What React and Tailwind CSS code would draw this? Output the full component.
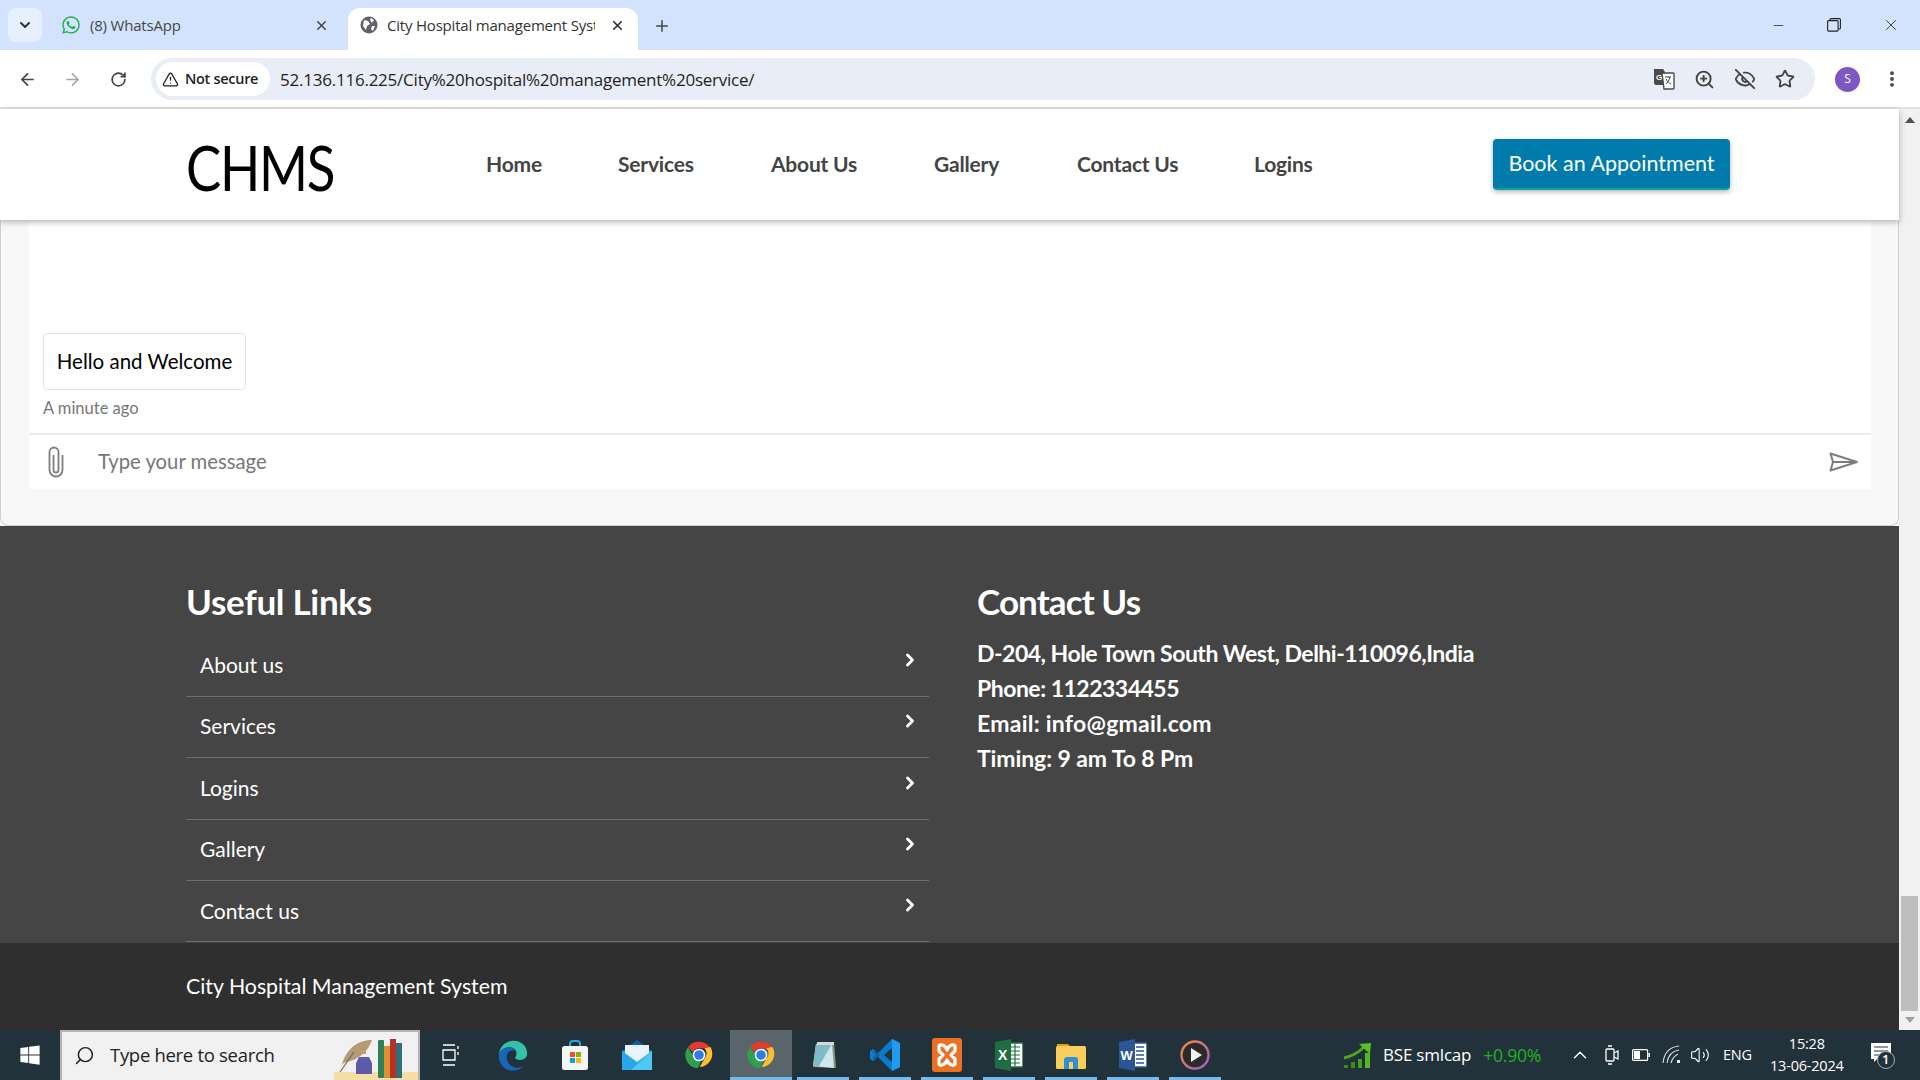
import React from 'react';
import { FaWhatsapp, FaWindows } from 'react-icons/fa';
import { ChevronDown, X, Plus, ArrowLeft, ArrowRight, RotateCw, TriangleAlert, ZoomIn, EyeOff, Star, EllipsisVertical, Minus, Search, ChevronRight, ChevronUp, Volume2 } from 'lucide-react';

const navItems = [
  { label: 'Home', cls: 'w-[55px]' },
  { label: 'Services', cls: 'w-[76px]' },
  { label: 'About Us', cls: 'w-[86px]' },
  { label: 'Gallery', cls: 'w-[66px]' },
  { label: 'Contact Us', cls: 'w-[100px]' },
  { label: 'Logins', cls: 'w-[61px]' },
];
const links = ['About us', 'Services', 'Logins', 'Gallery', 'Contact us'];
const contact = [
  { text: 'D-204, Hole Town South West, Delhi-110096,India', cls: 'tracking-[-0.5px]' },
  { text: 'Phone: 1122334455', cls: 'tracking-[-0.5px]' },
  { text: 'Email: info@gmail.com', cls: 'tracking-[0.25px]' },
  { text: 'Timing: 9 am To 8 Pm', cls: 'tracking-[-0.1px]' },
];

function ChromeLogo({ size = 26 }) {
  return (
    <svg width={size} height={size} viewBox="0 0 48 48">
      <path d="M24 4a20 20 0 0 1 17.3 10H24a10 10 0 0 0-9.2 6L7.6 12A20 20 0 0 1 24 4z" fill="#e33b2e" />
      <path d="M41.3 14A20 20 0 0 1 25 44l8.6-15A10 10 0 0 0 32 16z" fill="#fbc02d" transform="translate(0 -2)" />
      <path d="M7.6 12l9 15.5A10 10 0 0 0 27 33.5L22.5 44A20 20 0 0 1 7.6 12z" fill="#2e9e4f" />
      <circle cx="24" cy="24" r="9.5" fill="#fff" />
      <circle cx="24" cy="24" r="7.2" fill="#2f7de1" />
    </svg>
  );
}

function EdgeLogo() {
  return (
    <svg width="34" height="34" viewBox="0 0 48 48">
      <path d="M4 26C4 12 14 4 25 4c11 0 19 8 19 18 0 6-5 9-10 9-4 0-7-1-7-3 0-1 2-2 2-6 0-5-4-9-10-9C11 13 4 19 4 26z" fill="#35c1a8" />
      <path d="M4 26c0-8 7-13 14-13 5 0 8 2 10 5-6-2-13 1-13 9 0 8 7 15 15 15 3 0 6-1 8-2-4 5-9 6-14 6C13 46 4 37 4 26z" fill="#1667b8" />
    </svg>
  );
}

function StoreLogo() {
  return (
    <svg width="28" height="32" viewBox="0 0 28 32">
      <path d="M9 8V5a3 3 0 0 1 3-3h4a3 3 0 0 1 3 3v3" fill="none" stroke="#2aa7d8" strokeWidth="2" />
      <rect x="1" y="7" width="26" height="24" rx="2.5" fill="#f5f5f5" />
      <rect x="9" y="13" width="5" height="5" fill="#f25022" />
      <rect x="15" y="13" width="5" height="5" fill="#7fba00" />
      <rect x="9" y="19" width="5" height="5" fill="#00a4ef" />
      <rect x="15" y="19" width="5" height="5" fill="#ffb900" />
    </svg>
  );
}

function MailLogo() {
  return (
    <svg width="32" height="32" viewBox="0 0 32 32">
      <path d="M16 1L31 12H1z" fill="#0f5fa8" />
      <rect x="1" y="12" width="30" height="19" fill="#2aa5e8" />
      <path d="M4 6h24v12l-12 6-12-6z" fill="#e8f4fc" />
      <path d="M1 12l15 11 15-11v19H1z" fill="#28a8ea" />
      <path d="M31 12v19H10z" fill="#50c8f5" />
    </svg>
  );
}

function NotepadLogo() {
  return (
    <svg width="32" height="32" viewBox="0 0 32 32">
      <path d="M10 3h17l2 26-23-1z" fill="#8c8f7e" />
      <path d="M9 5h16l2 24-21-2z" fill="#cfe7ea" />
      <path d="M9 5h16L12 27l-6 0z" fill="#7fbcc8" />
      <path d="M10 3h17v3H10z" fill="#d8d8d8" />
    </svg>
  );
}

function VscodeLogo() {
  return (
    <svg width="32" height="34" viewBox="0 0 32 34">
      <path d="M23 1l8 4v24l-8 4L9 19l-5 4-3-2v-8l3-2 5 4z" fill="#0a7cd0" />
      <path d="M23 1l8 4v24l-8 4z" fill="#1f9cf0" />
      <path d="M23 10l-8 7 8 7z" fill="#22313a" />
      <path d="M4 13l3-1 4 5-4 5-3-1 2-4z" fill="#22313a" opacity="0.35" />
    </svg>
  );
}

function XamppLogo() {
  return (
    <svg width="30" height="34" viewBox="0 0 30 34">
      <rect width="30" height="34" rx="3" fill="#ea7124" />
      <path d="M7 8c0-2 6-2 8 4 2-6 8-6 8-4v5l-4 4 4 4v5c0 2-6 2-8-4-2 6-8 6-8 4v-5l4-4-4-4z" fill="none" stroke="#fff" strokeWidth="3.2" strokeLinejoin="round" />
    </svg>
  );
}

function ExcelLogo() {
  return (
    <svg width="28" height="32" viewBox="0 0 28 32">
      <rect x="12" y="4" width="16" height="24" fill="#fff" stroke="#1d6f42" strokeWidth="1.5" />
      <path d="M16 8h9M16 12h9M16 16h9M16 20h9M16 24h9M20 5v22" stroke="#1d6f42" strokeWidth="1.2" />
      <path d="M0 3l16-3v32L0 29z" fill="#1d6f42" />
      <text x="3" y="21" fill="#fff" fontSize="14" fontWeight="700" fontFamily="Liberation Sans, sans-serif">X</text>
    </svg>
  );
}

function FolderLogo() {
  return (
    <svg width="30" height="28" viewBox="0 0 30 28">
      <path d="M1 3h11l3 3h-14z" fill="#e2a20e" />
      <rect x="0" y="5" width="30" height="23" rx="1.5" fill="#f9cf5b" />
      <path d="M8 28v-9a3 3 0 0 1 3-3h8a3 3 0 0 1 3 3v9h-5v-7h-4v7z" fill="#2c8fd8" />
    </svg>
  );
}

function WordLogo() {
  return (
    <svg width="28" height="32" viewBox="0 0 28 32">
      <rect x="12" y="4" width="16" height="24" fill="#fff" stroke="#2a5699" strokeWidth="1.5" />
      <path d="M17 8h8M17 12h8M17 16h8M17 20h8M17 24h8" stroke="#2a5699" strokeWidth="1.4" />
      <path d="M0 3l16-3v32L0 29z" fill="#2a5699" />
      <text x="1.5" y="21" fill="#fff" fontSize="13" fontWeight="700" fontFamily="Liberation Sans, sans-serif">W</text>
    </svg>
  );
}

function PlayerLogo() {
  return (
    <svg width="30" height="30" viewBox="0 0 30 30">
      <defs>
        <linearGradient id="ring" x1="0" y1="0" x2="1" y2="1">
          <stop offset="0" stopColor="#f08a3c" />
          <stop offset="1" stopColor="#9a5fc9" />
        </linearGradient>
      </defs>
      <circle cx="15" cy="15" r="13.5" fill="#2b2b2b" stroke="url(#ring)" strokeWidth="2.4" />
      <path d="M11 8l11 7-11 7z" fill="#f2f2f2" />
    </svg>
  );
}

function SearchArt() {
  return (
    <svg width="84" height="48" viewBox="0 0 84 48">
      <rect x="0" y="40" width="84" height="8" fill="#f6dfa6" />
      <path d="M8 32C14 14 26 8 38 8 34 20 24 28 12 30z" fill="#b49a78" />
      <path d="M6 40L20 20" stroke="#7b6650" strokeWidth="1.2" />
      <rect x="27" y="18" width="5" height="4" fill="#c9a063" />
      <path d="M25 25h10l3 6v11H22V31z" fill="#5d5aa8" />
      <rect x="44" y="8" width="6" height="38" rx="1" fill="#2f7e5c" />
      <rect x="50" y="14" width="6" height="32" fill="#e0912f" />
      <rect x="56" y="7" width="6" height="39" fill="#b92f2a" />
      <rect x="62" y="11" width="6" height="35" fill="#2e6f7a" />
    </svg>
  );
}

function TranslateIcon() {
  return (
    <svg width="22" height="22" viewBox="0 0 22 22">
      <path d="M1 1h9l2 3v13H3a2 2 0 0 1-2-2z" fill="#4a4a4a" />
      <path d="M9 5h11a1 1 0 0 1 1 1v14a1 1 0 0 1-1 1H11z" fill="#fff" stroke="#4a4a4a" strokeWidth="1.4" />
      <text x="3" y="12" fill="#fff" fontSize="8" fontWeight="700" fontFamily="Liberation Sans, sans-serif">G</text>
      <path d="M12 9h6M15 8v1M17 9c-1 4-3 6-4 7M13 11c1 2 3 4 5 5" fill="none" stroke="#4a4a4a" strokeWidth="1" />
    </svg>
  );
}

function ClipIcon() {
  return (
    <svg width="16" height="32" viewBox="0 0 16 32" fill="none" stroke="#7d7d7d" strokeWidth="1.8">
      <path d="M5.5 9v15a2.5 2.5 0 0 0 5 0V6a4.5 4.5 0 0 0-9 0v18a6.5 6.5 0 0 0 13 0V9" />
    </svg>
  );
}

function SendIcon() {
  return (
    <svg width="30" height="20" viewBox="0 0 30 20" fill="none" stroke="#7d7d7d" strokeWidth="2">
      <path d="M1.5 1.5L28 10 1.5 18.5 4 10z" strokeLinejoin="round" />
      <path d="M4 10h24" />
    </svg>
  );
}

function BseIcon() {
  return (
    <svg width="30" height="28" viewBox="0 0 30 28">
      <path d="M1 17C10 15 16 11 21 6" fill="none" stroke="#4ca81e" strokeWidth="3" />
      <path d="M16 3l12-1-1 11z" fill="#5cc021" />
      <rect x="1" y="24" width="4" height="3" fill="#3c8e18" />
      <rect x="8" y="21" width="4" height="6" fill="#3c8e18" />
      <rect x="15" y="18" width="4" height="9" fill="#46a01c" />
      <rect x="22" y="12" width="5" height="15" fill="#56b81f" />
    </svg>
  );
}

function TaskApp({ children, active, bar = true }) {
  return (
    <div className={`relative flex h-full w-[62px] items-center justify-center ${active ? 'bg-[#59656b]' : ''}`}>
      {children}
      {bar && <div className={`absolute bottom-0 h-[3px] bg-[#76b9ed] ${active ? 'inset-x-0' : 'inset-x-[5px]'}`}></div>}
    </div>
  );
}

export default function App() {
  return (
    <div className="flex h-[1080px] w-[1920px] flex-col overflow-hidden bg-white [font-family:Lato,sans-serif]">
      {/* tab strip */}
      <div className="flex h-[50px] items-end bg-[#d3e3fd] pl-[8px] [font-family:'Open_Sans',sans-serif] text-[15px]">
        <div className="mb-[8px] flex h-[34px] w-[34px] items-center justify-center rounded-lg bg-[#e6effd]">
          <ChevronDown size={16} strokeWidth={3} className="text-[#333]" />
        </div>
        <div className="mb-[8px] ml-[19px] flex h-[34px] w-[282px] items-center">
          <FaWhatsapp size={20} className="text-[#22b14c]" />
          <span className="ml-[9px] text-[#474747] tracking-[-0.2px]">(8) WhatsApp</span>
          <X size={15} strokeWidth={2.4} className="ml-auto mr-[14px] text-[#474747]" />
        </div>
        <div className="ml-[5px] flex h-[42px] w-[290px] items-center rounded-t-xl bg-white pb-[8px] pl-[11px] pr-[13px] text-[#333]">
          <svg width="18" height="18" viewBox="0 0 18 18" className="ml-[1px]">
            <circle cx="9" cy="9" r="8.5" fill="#5f6368" />
            <path d="M4 4l4 1 2 3-3 2-1 4-3-4zM11 2l3 2-2 3-2-3zM12 10l3 0-2 5-2-2z" fill="#fff" />
          </svg>
          <span className="ml-[9px] w-[208px] overflow-hidden whitespace-nowrap tracking-[-0.2px]">City Hospital management Syst</span>
          <X size={15} strokeWidth={2.8} className="ml-auto text-[#333]" />
        </div>
        <Plus size={18} strokeWidth={2} className="mb-[15px] ml-[15px] text-[#444]" />
        <div className="ml-auto mb-[16px] flex items-center text-[#222]">
          <Minus size={15} strokeWidth={1.2} className="mr-[41px]" />
          <svg width="14" height="14" viewBox="0 0 14 14" fill="none" stroke="#222" strokeWidth="1.1" className="mr-[41px]">
            <rect x="0.6" y="2.6" width="10.5" height="10.5" rx="1" />
            <path d="M3 2.5V1.6a1 1 0 0 1 1-1h8.4a1 1 0 0 1 1 1V10a1 1 0 0 1-1 1h-1.2" />
          </svg>
          <X size={18} strokeWidth={1.1} className="mr-[20px]" />
        </div>
      </div>

      {/* toolbar */}
      <div className="flex h-[59px] items-center rounded-t-lg border-b-2 border-[#e3e3e3] bg-white pt-[1px]">
        <ArrowLeft size={19} strokeWidth={2.2} className="ml-[18px] text-[#444]" />
        <ArrowRight size={19} strokeWidth={2.2} className="ml-[26px] text-[#a8a8a8]" />
        <RotateCw size={17} strokeWidth={2.4} className="ml-[28px] text-[#444]" />
        <div className="ml-[24px] flex h-[42px] w-[1664px] items-center rounded-full bg-[#e9edf8] pl-[5px]">
          <div className="flex h-[34px] w-[114px] items-center rounded-full bg-white pl-[6px] text-[14.5px] text-[#1f1f1f] [font-family:'Open_Sans',sans-serif] tracking-[-0.3px]">
            <TriangleAlert size={17} strokeWidth={1.8} />
            <span className="ml-[6px] font-semibold">Not secure</span>
          </div>
          <span className="ml-[10px] mt-[1px] [font-family:'Open_Sans',sans-serif] text-[17px] tracking-[-0.23px] text-[#1f1f1f]">52.136.116.225/City%20hospital%20management%20service/</span>
          <div className="ml-auto flex items-center gap-[19px] pr-[20px] text-[#444]">
            <TranslateIcon />
            <ZoomIn size={21} strokeWidth={2.2} />
            <EyeOff size={22} strokeWidth={2} />
            <Star size={20} strokeWidth={2.2} />
          </div>
        </div>
        <div className="ml-[20px] flex h-[25px] w-[25px] items-center justify-center rounded-full bg-[#7e57c2] text-[12px] text-white [font-family:'Open_Sans',sans-serif]">S</div>
        <EllipsisVertical size={20} strokeWidth={2.6} className="ml-[22px] text-[#444]" />
      </div>

      {/* page + scrollbar */}
      <div className="flex min-h-0 flex-1">
        <div className="flex w-[1899px] flex-col">
          <header className="relative z-10 flex h-[111px] items-center bg-white pl-[186px] shadow-[0_2px_6px_rgba(0,0,0,0.3)]">
            <div className="mt-[6px] w-[300px] origin-left scale-x-[0.865] text-[61px] leading-none tracking-[-1.5px] text-black">CHMS</div>
            <nav className="mb-[2px] flex gap-[77px] text-[21px] font-bold text-[#444]">
              {navItems.map((n) => (
                <a key={n.label} className={`${n.cls} whitespace-nowrap tracking-[-0.2px]`}>{n.label}</a>
              ))}
            </nav>
            <button className="ml-[178px] flex h-[51px] w-[237px] items-center justify-center rounded-sm border-b-2 border-[#0aa0a0] bg-[#007bac] text-[21.5px] text-white shadow-[0_2px_5px_rgba(0,0,0,0.3)]">Book an Appointment</button>
          </header>

          <section className="flex h-[306px] flex-col rounded-b-lg border-x border-b border-[#cfcfcf] bg-[#f8f8f8] pb-[36px] pl-[28px] pr-[27px]">
            <div className="flex flex-1 flex-col bg-white">
              <div className="flex flex-1 flex-col items-start justify-end border-b-2 border-[#ececec] px-[14px] pb-[12px]">
                <div className="flex h-[57px] w-[203px] items-center justify-center rounded-sm border border-[#e5e5e5] text-[20.5px] text-black">Hello and Welcome</div>
                <div className="mt-[6px] text-[16.5px] text-[#777]">A minute ago</div>
              </div>
              <div className="flex h-[54px] items-center pl-[19px] pr-[12px]">
                <ClipIcon />
                <span className="ml-[34px] text-[20.3px] text-[#777]">Type your message</span>
                <div className="ml-auto"><SendIcon /></div>
              </div>
            </div>
          </section>

          <footer className="flex h-[418px] gap-[48px] bg-[#454545] pl-[186px] pt-[53px] text-white">
            <div className="w-[743px]">
              <h2 className="text-[35px] font-bold leading-[44px] tracking-[-0.3px]">Useful Links</h2>
              <ul className="mt-[13px]">
                {links.map((l) => (
                  <li key={l} className="flex h-[61.4px] items-center justify-between border-b border-[#6d6d6d] pb-[2px] pl-[14px] pr-[9px] text-[21px]">
                    <span>{l}</span>
                    <ChevronRight size={20} strokeWidth={3.4} className="mb-[10px]" />
                  </li>
                ))}
              </ul>
            </div>
            <div>
              <h2 className="text-[35px] font-bold leading-[44px] tracking-[-0.9px]">Contact Us</h2>
              <div className="mt-[13px] text-[23px] font-bold leading-[35px]">
                {contact.map((c) => (
                  <div key={c.text} className={c.cls}>{c.text}</div>
                ))}
              </div>
            </div>
          </footer>

          <div className="flex h-[87px] items-center bg-[#2f2f2f] pl-[186px] text-[21.3px] text-white">City Hospital Management System</div>
        </div>

        <div className="flex w-[21px] flex-col items-center bg-[#f1f1f1]">
          <div className="mt-[8px] h-0 w-0 border-x-[5px] border-b-[6px] border-x-transparent border-b-[#505050]"></div>
          <div className="mt-[773px] h-[115px] w-[17px] bg-[#bdbdbd]"></div>
          <div className="mt-[6px] h-0 w-0 border-x-[5px] border-t-[6px] border-x-transparent border-t-[#a0a0a0]"></div>
        </div>
      </div>

      {/* taskbar */}
      <div className="flex h-[50px] shrink-0 items-center bg-[#22323b] text-white [font-family:'Open_Sans',sans-serif]">
        <div className="flex w-[60px] justify-center"><FaWindows size={22} /></div>
        <div className="flex h-full w-[360px] items-center justify-between border-2 border-b-0 border-[#b5b5b5] bg-[#f1f1f1] pl-[12px] text-[#222]">
          <div className="mb-[2px] flex items-center">
            <Search size={21} strokeWidth={1.7} className="-scale-x-100" />
            <span className="ml-[15px] text-[18.5px] tracking-[-0.3px]">Type here to search</span>
          </div>
          <SearchArt />
        </div>
        <div className="flex h-full w-[62px] items-center justify-center">
          <svg width="18" height="22" viewBox="0 0 18 22" fill="none" stroke="#fff" strokeWidth="1.3">
            <path d="M1 1h12M1 21h12M1 6h12v10H1zM16 2v3M16 8v3" />
          </svg>
        </div>
        <TaskApp bar={false}><EdgeLogo /></TaskApp>
        <TaskApp bar={false}><StoreLogo /></TaskApp>
        <TaskApp bar={false}><MailLogo /></TaskApp>
        <TaskApp bar={false}><ChromeLogo size={32} /></TaskApp>
        <TaskApp active><ChromeLogo size={32} /></TaskApp>
        <TaskApp><NotepadLogo /></TaskApp>
        <TaskApp><VscodeLogo /></TaskApp>
        <TaskApp><XamppLogo /></TaskApp>
        <TaskApp><ExcelLogo /></TaskApp>
        <TaskApp><FolderLogo /></TaskApp>
        <TaskApp><WordLogo /></TaskApp>
        <TaskApp><PlayerLogo /></TaskApp>

        <div className="ml-[117px] flex items-center">
          <BseIcon />
          <span className="ml-[10px] text-[17px] tracking-[-0.2px]">BSE smlcap</span>
          <span className="ml-[12px] text-[17.6px] tracking-[-0.3px] text-[#1fb41f]">+0.90%</span>
        </div>
        <ChevronUp size={22} strokeWidth={1.5} className="ml-[28px]" />
        <svg width="14" height="20" viewBox="0 0 14 20" fill="none" stroke="#fff" strokeWidth="1.3" className="ml-[14px]">
          <rect x="1" y="4" width="8" height="12" rx="1" />
          <path d="M9 8l4-2v8l-4-2M3 1h4M3 19h4" />
        </svg>
        <svg width="18" height="12" viewBox="0 0 18 12" className="ml-[13px]">
          <rect x="0.6" y="0.6" width="15" height="10.8" rx="1" fill="none" stroke="#fff" strokeWidth="1.2" />
          <rect x="2" y="2" width="6" height="8" fill="#fff" />
          <rect x="16.4" y="4" width="1.6" height="4" fill="#fff" />
        </svg>
        <svg width="20" height="20" viewBox="0 0 20 20" fill="none" stroke="#ddd" strokeWidth="1.1" className="ml-[12px]">
          <path d="M1 18C2 8 8 2 17 1M5 18C6 11 10 6 17 5M9 18c1-4 3-7 7-9" />
          <rect x="15" y="15" width="3" height="3" fill="#fff" stroke="none" />
        </svg>
        <Volume2 size={20} strokeWidth={1.3} className="ml-[8px]" />
        <span className="ml-[13px] text-[14.5px] tracking-[-0.2px]">ENG</span>
        <div className="ml-[10px] flex w-[90px] flex-col items-center whitespace-nowrap text-[14.5px] leading-[22px] tracking-[-0.2px]">
          <span>15:28</span>
          <span>13-06-2024</span>
        </div>
        <div className="relative ml-[19px] h-[24px] w-[20px]">
          <svg width="20" height="20" viewBox="0 0 20 20">
            <path d="M0 0h20v16H6l-3 3v-3H0z" fill="#fff" />
            <path d="M3 4h14M3 8h14M3 12h10" stroke="#22323b" strokeWidth="1.2" />
          </svg>
          <div className="absolute -right-[4px] top-[8px] flex h-[18px] w-[18px] items-center justify-center rounded-full border border-[#aaa] bg-[#22323b] text-[13px] font-semibold">1</div>
        </div>
      </div>
    </div>
  );
}
